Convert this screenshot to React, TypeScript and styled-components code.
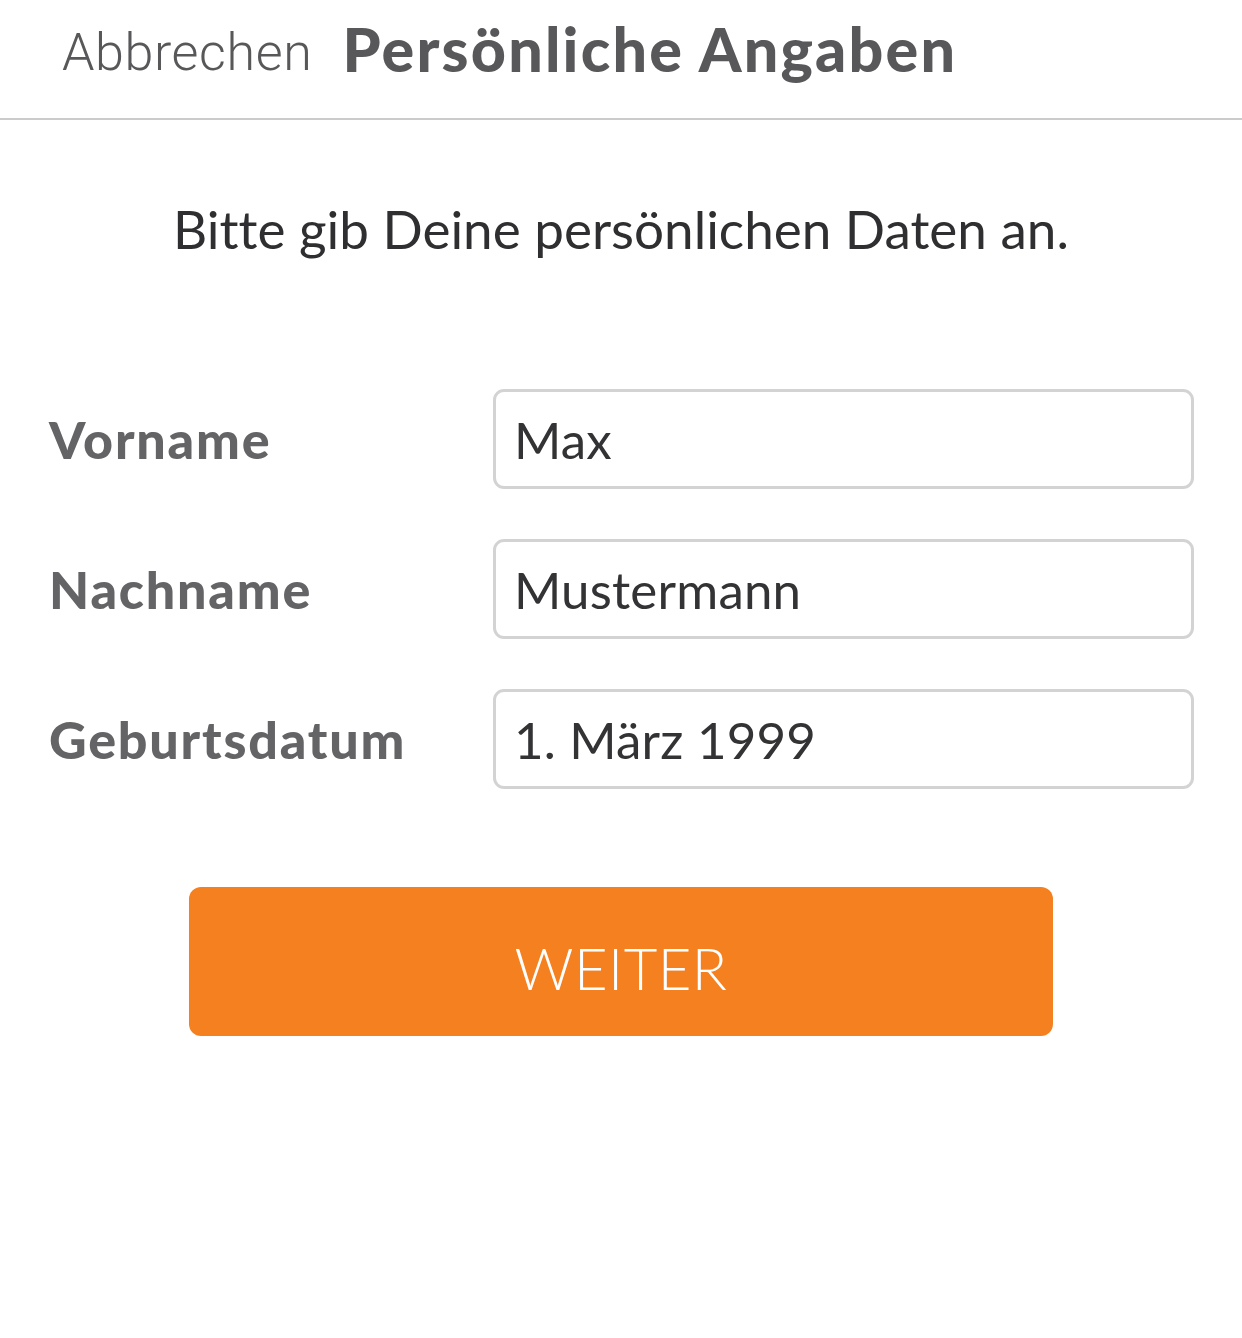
import * as React from 'react';
import styled, { createGlobalStyle } from 'styled-components';

const GlobalStyle = createGlobalStyle`
  html, body {
    margin: 0;
    padding: 0;
    background: #ffffff;
  }
  body {
    font-family: Lato, 'Noto Sans', sans-serif;
    font-variant-ligatures: none;
  }
`;

const Page = styled.div`
  width: 1242px;
  min-height: 1338px;
  background: #ffffff;
`;

const Header = styled.header`
  height: 118px;
  display: flex;
  align-items: flex-start;
  padding-left: 62px;
  gap: 30px;
  border-bottom: 2px solid #cbcbcb;
  box-sizing: content-box;
`;

const Cancel = styled.span`
  font-family: Roboto, 'Liberation Sans', sans-serif;
  font-weight: 300;
  font-size: 52px;
  letter-spacing: 0.6px;
  line-height: 1;
  color: #58585a;
  margin-top: 27px;
`;

const Title = styled.h1`
  margin: 0;
  margin-top: 18px;
  font-family: Lato, sans-serif;
  font-weight: 900;
  font-size: 61px;
  letter-spacing: 2.2px;
  line-height: 1;
  color: #58585b;
`;

const Intro = styled.p`
  margin: 0;
  padding-top: 82px;
  text-align: center;
  font-family: Lato, sans-serif;
  font-weight: 400;
  font-size: 53px;
  line-height: 1;
  color: #2f2f31;
`;

const Form = styled.form`
  display: flex;
  flex-direction: column;
  gap: 50px;
  padding: 134px 48px 0 49px;
`;

const Row = styled.div`
  display: grid;
  grid-template-columns: 444px 1fr;
  align-items: center;
`;

const Label = styled.label`
  font-family: Lato, sans-serif;
  font-weight: 900;
  font-size: 52px;
  letter-spacing: 1.8px;
  color: #646466;
`;

const Field = styled.div`
  height: 100px;
  box-sizing: border-box;
  border: 3px solid #d3d3d3;
  border-radius: 11px;
  display: flex;
  align-items: center;
  padding-left: 18px;
  font-family: Lato, sans-serif;
  font-weight: 400;
  font-size: 51px;
  letter-spacing: 0.2px;
  color: #333335;
`;

const ButtonWrap = styled.div`
  display: flex;
  justify-content: center;
  padding-top: 98px;
`;

const Button = styled.button`
  width: 864px;
  height: 149px;
  padding: 12px 0 0;
  border: none;
  border-radius: 12px;
  background: #f58020;
  color: #ffffff;
  font-family: Lato, sans-serif;
  font-weight: 300;
  font-size: 58px;
  letter-spacing: 0.5px;
  cursor: pointer;
`;

const fields = [
  { label: 'Vorname', value: 'Max' },
  { label: 'Nachname', value: 'Mustermann' },
  { label: 'Geburtsdatum', value: '1. März 1999' },
];

export default function App() {
  return (
    <Page>
      <GlobalStyle />
      <Header>
        <Cancel>Abbrechen</Cancel>
        <Title>Persönliche Angaben</Title>
      </Header>
      <Intro>Bitte gib Deine persönlichen Daten an.</Intro>
      <Form>
        {fields.map((f) => (
          <Row key={f.label}>
            <Label>{f.label}</Label>
            <Field>{f.value}</Field>
          </Row>
        ))}
      </Form>
      <ButtonWrap>
        <Button type="button">WEITER</Button>
      </ButtonWrap>
    </Page>
  );
}
